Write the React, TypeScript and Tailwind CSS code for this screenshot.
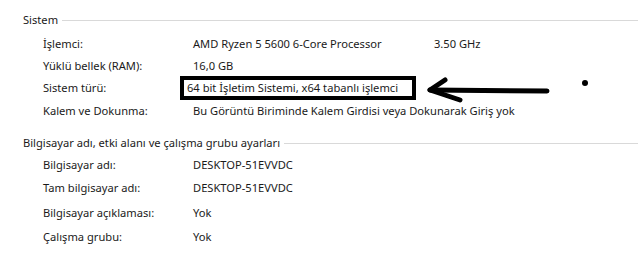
import React from "react";

const font = { fontFamily: '"Noto Sans", "Open Sans", sans-serif' };

function Header({ title }: { title: string }) {
  return (
    <div className="flex items-center h-[16px] pl-[23px] pr-0">
      <span className="whitespace-nowrap">{title}</span>
      <div className="flex-1 h-px bg-[#d9d9d9] ml-[4px]" />
    </div>
  );
}

function Row({ label, h, children }: { label: string; h: string; children: React.ReactNode }) {
  return (
    <div className={`flex items-center pl-[43px] ${h}`}>
      <div className="w-[150px] whitespace-nowrap">{label}</div>
      <div className="flex items-center whitespace-nowrap">{children}</div>
    </div>
  );
}

export default function App() {
  return (
    <div
      className="relative w-[638px] h-[260px] bg-white text-[11.15px] leading-[16px] text-[#1a1a1a] overflow-hidden"
      style={font}
    >
      <div className="pt-[12px]">
        <Header title="Sistem" />
        <div className="mt-[5px]">
          <Row label="İşlemci:" h="h-[22px]">
            <span className="w-[241px]">AMD Ryzen 5 5600 6-Core Processor</span>
            <span>3.50 GHz</span>
          </Row>
          <Row label="Yüklü bellek (RAM):" h="h-[21px]">
            <span>16,0 GB</span>
          </Row>
          <Row label="Sistem türü:" h="h-[24px]">
            <span className="-ml-[13px] h-[24px] w-[236px] border-4 border-black pl-[3px] flex items-center">
              64 bit İşletim Sistemi, x64 tabanlı işlemci
            </span>
          </Row>
          <Row label="Kalem ve Dokunma:" h="h-[22px]">
            <span>Bu Görüntü Biriminde Kalem Girdisi veya Dokunarak Giriş yok</span>
          </Row>
        </div>
        <div className="mt-[13px]">
          <Header title="Bilgisayar adı, etki alanı ve çalışma grubu ayarları" />
        </div>
        <div className="mt-[3px]">
          <Row label="Bilgisayar adı:" h="h-[22px]">
            <span>DESKTOP-51EVVDC</span>
          </Row>
          <Row label="Tam bilgisayar adı:" h="h-[24px]">
            <span>DESKTOP-51EVVDC</span>
          </Row>
          <Row label="Bilgisayar açıklaması:" h="h-[25px]">
            <span>Yok</span>
          </Row>
          <Row label="Çalışma grubu:" h="h-[24px]">
            <span>Yok</span>
          </Row>
        </div>
      </div>
      <svg className="absolute left-0 top-0" width="638" height="260" viewBox="0 0 638 260">
        <g stroke="#000" strokeWidth="5" strokeLinecap="round" strokeLinejoin="round" fill="none">
          <path d="M547 91 L430 90" />
          <path d="M445 80 L430 90 L460 100" />
        </g>
        <circle cx="585" cy="83" r="3" fill="#000" />
      </svg>
    </div>
  );
}
